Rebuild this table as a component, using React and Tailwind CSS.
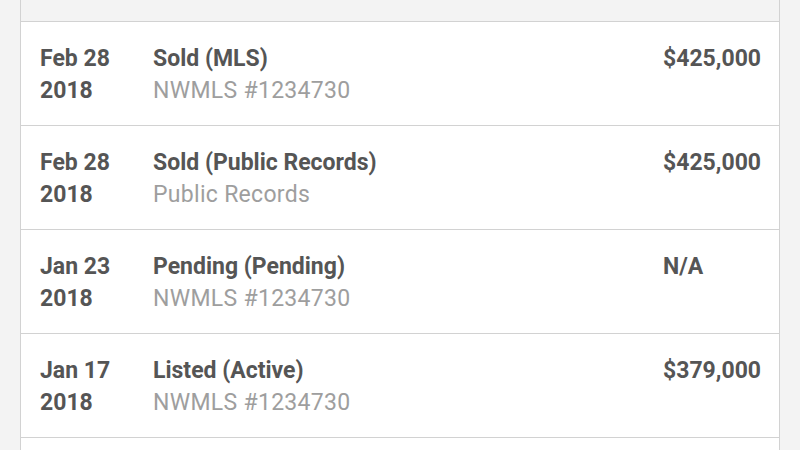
const rows = [
  { date: "Feb 28", year: "2018", title: "Sold (MLS)", source: "NWMLS #1234730", price: "$425,000" },
  { date: "Feb 28", year: "2018", title: "Sold (Public Records)", source: "Public Records", price: "$425,000" },
  { date: "Jan 23", year: "2018", title: "Pending (Pending)", source: "NWMLS #1234730", price: "N/A" },
  { date: "Jan 17", year: "2018", title: "Listed (Active)", source: "NWMLS #1234730", price: "$379,000" },
];

export default function App() {
  return (
    <div
      className="w-[800px] h-[450px] overflow-hidden bg-[#f3f3f3] px-5"
      style={{ fontFamily: "Roboto, 'Liberation Sans', sans-serif" }}
    >
      <div className="border-x border-[#d2d2d2] h-full flex flex-col">
        {/* Header strip */}
        <div className="h-[21px] shrink-0 bg-[#f3f3f3]" />

        {rows.map((row, i) => (
          <div
            key={i}
            className="flex shrink-0 h-[104px] border-t border-[#d2d2d2] bg-white pt-[21px] pl-[19px] text-[23px] leading-8"
          >
            <div className="w-[113px] font-bold text-[#555555]">
              <div>{row.date}</div>
              <div>{row.year}</div>
            </div>
            <div className="flex-1">
              <div className="font-bold text-[#555555]">{row.title}</div>
              <div className="text-[#9e9e9e] tracking-[0.3px]">{row.source}</div>
            </div>
            <div className="w-[116px] font-bold text-[#555555]">{row.price}</div>
          </div>
        ))}

        {/* Next row, cut off by the window */}
        <div className="flex-1 border-t border-[#d2d2d2] bg-white" />
      </div>
    </div>
  );
}
